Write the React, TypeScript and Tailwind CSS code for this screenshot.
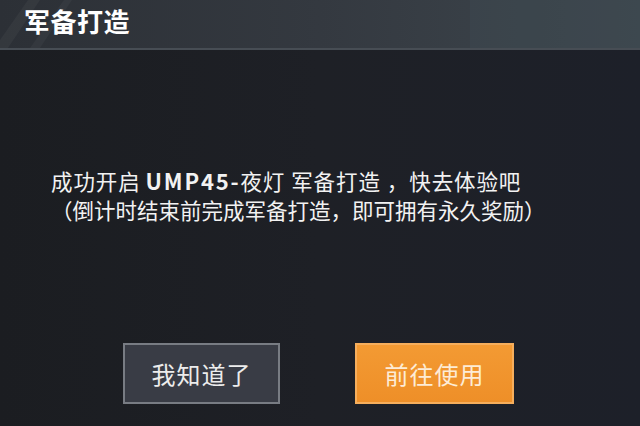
import React from 'react';

const cjk = { fontFamily: '"Noto Sans CJK SC", "Noto Sans", sans-serif' };

const Header: React.FC = () => (
    <div className="relative h-[50px] border-b-2 border-[#474d54] bg-gradient-to-r from-[#2c3036] via-[#343940] to-[#3d464d] overflow-hidden">
        <svg className="absolute left-0 top-0" width="120" height="48" viewBox="0 0 120 48">
            <polygon points="0,40 28,0 40,0 8,48 0,48" fill="#ffffff" fillOpacity="0.04" />
            <polygon points="30,48 64,0 72,0 40,48" fill="#ffffff" fillOpacity="0.035" />
        </svg>
        <div className="absolute right-0 top-0 h-full w-[170px] bg-[#3e4a52] opacity-40" />
        <h1 className="relative pl-[24px] pt-[3px] text-[26px] font-bold leading-[36px] text-white tracking-[0.5px]" style={cjk}>
            军备打造
        </h1>
    </div>
);

const Gap: React.FC<{ w: string }> = ({ w }) => <span className={`inline-block ${w}`} />;

const App: React.FC = () => {
    return (
        <div className="w-[640px] h-[426px] flex flex-col bg-[#1c1e23] overflow-hidden" style={cjk}>
            <Header />
            <div className="flex-grow flex flex-col bg-gradient-to-r from-[#1b1d21] via-[#1e2026] to-[#1d2029]">
                <div className="pl-[51px] pt-[116px] text-[21.5px] leading-[29px] text-[#f2f2f2]">
                    <p className="whitespace-nowrap tracking-[0.9px]">
                        成功开启<Gap w="w-[5px]" /><span className="font-bold text-[22px] leading-none tracking-[1.8px]">UMP45-</span>夜灯<Gap w="w-[6px]" />军备打造<Gap w="w-[6px]" />，快去体验吧
                    </p>
                    <p className="whitespace-nowrap">（倒计时结束前完成军备打造，即可拥有永久奖励）</p>
                </div>
                <div className="flex pl-[123px] pt-[119px] gap-[75px]">
                    <button className="w-[157px] h-[61px] border-2 border-[#787c83] bg-[#393c45] text-[24px] tracking-[1px] text-[#ececec]">
                        我知道了
                    </button>
                    <button className="w-[159px] h-[61px] border-2 border-[#f6ae5c] bg-gradient-to-b from-[#f39a33] to-[#ee8f28] text-[24px] tracking-[1px] text-[#fdecd6]">
                        前往使用
                    </button>
                </div>
            </div>
        </div>
    );
};

export default App;
